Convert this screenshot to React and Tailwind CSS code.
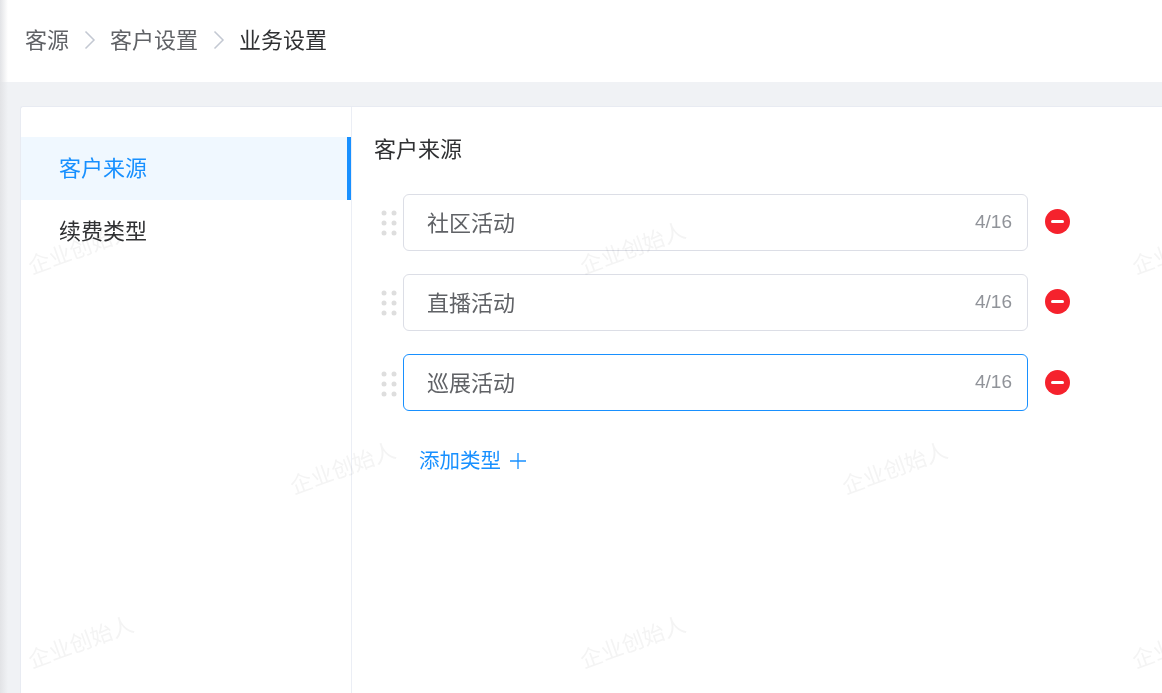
const rows = [
  { id: 1, name: '社区活动' },
  { id: 2, name: '直播活动' },
  { id: 3, name: '巡展活动', focused: true },
];

const marks = [
  'left-[26px] top-[236px]',
  'left-[578px] top-[236px]',
  'left-[1130px] top-[236px]',
  'left-[288px] top-[456px]',
  'left-[840px] top-[456px]',
  'left-[26px] top-[630px]',
  'left-[578px] top-[630px]',
  'left-[1130px] top-[630px]',
];

const Chevron = () => (
  <svg width="12" height="20" viewBox="0 0 12 20" fill="none" stroke="#c3c8d2" strokeWidth="1.5" className="ml-[15px] mr-[14px]">
    <path d="M1.5 1.5 10 10l-8.500 8.500" />
  </svg>
);

const Grip = ({ focused }) => (
  <svg
    width="16"
    height="26"
    viewBox="0 0 16 26"
    fill="#dedede"
    className={`mr-[6px] shrink-0 ${focused ? 'mt-[2px]' : ''}`}
  >
    <circle cx="3" cy="3" r="2.500" />
    <circle cx="13" cy="3" r="2.500" />
    <circle cx="3" cy="13" r="2.500" />
    <circle cx="13" cy="13" r="2.500" />
    <circle cx="3" cy="23" r="2.500" />
    <circle cx="13" cy="23" r="2.500" />
  </svg>
);

const Row = ({ name, focused }) => (
  <div className="flex items-center">
    <Grip focused={focused} />
    <div
      className={`flex h-[57px] w-[625px] items-center justify-between rounded-[6px] border pl-[23px] pr-[15px] ${
        focused ? 'border-[#1890ff]' : 'border-[#dcdee6]'
      }`}
    >
      <span className="pt-[2px] text-[22px] text-[#606266]">{name}</span>
      <span className="text-[19px] text-[#909399]">4/16</span>
    </div>
    <button
      className={`ml-[17px] flex h-[25px] w-[25px] items-center justify-center rounded-full bg-[#f5222d] ${
        focused ? '' : 'mb-[2px]'
      }`}
    >
      <span className="h-[3px] w-[13px] rounded-full bg-white" />
    </button>
  </div>
);

export default function App() {
  return (
    <div className="relative h-[693px] w-[1162px] overflow-hidden bg-[#f0f2f5] font-['Liberation_Sans','Noto_Sans_CJK_SC',sans-serif]">
      {/* Header */}
      <div className="flex h-[82px] items-center bg-white pb-[2px] pl-[25px] text-[22px] text-[#606266]">
        <span>客源</span>
        <Chevron />
        <span>客户设置</span>
        <Chevron />
        <span className="text-[#303133]">业务设置</span>
      </div>

      <div className="pl-[20px] pt-[24px]">
        <div className="flex h-[587px] rounded-tl-[3px] border-l border-t border-[#e8ebf2] bg-white pt-[30px]">
          {/* Side menu */}
          <div className="-mt-[30px] w-[331px] shrink-0 border-r border-[#ebeef5] pt-[30px]">
            <div className="flex h-[63px] items-center border-r-4 border-[#1890ff] bg-[#f0f8ff] pl-[38px] text-[22px] text-[#1890ff]">
              客户来源
            </div>
            <div className="flex h-[63px] items-center pl-[38px] text-[22px] text-[#303133]">续费类型</div>
          </div>

          {/* Source list */}
          <div className="pl-[22px]">
            <h2 className="text-[22px] font-normal leading-[26px] text-[#303133]">客户来源</h2>
            <div className="mt-[31px] flex flex-col gap-[23px] pl-[7px]">
              {rows.map((row) => (
                <Row key={row.id} name={row.name} focused={row.focused} />
              ))}
            </div>
            <button className="ml-[45px] mt-[36px] flex items-center text-[20.5px] leading-[28px] text-[#1890ff]">
              添加类型
              <svg width="16" height="16" viewBox="0 0 16 16" stroke="currentColor" strokeWidth="1.3" className="ml-[9px]">
                <path d="M0 8h16M8 0v16" />
              </svg>
            </button>
          </div>
        </div>
      </div>

      {/* Watermarks */}
      {marks.map((pos) => (
        <span
          key={pos}
          className={`pointer-events-none absolute whitespace-nowrap text-[22px] leading-[26px] text-[#f4f4f4] mix-blend-multiply -rotate-[20deg] ${pos}`}
        >
          企业创始人
        </span>
      ))}

      {/* Left edge shadow */}
      <div className="pointer-events-none absolute inset-y-0 left-0 w-[8px] bg-gradient-to-r from-[#e2e3e6] to-transparent" />
    </div>
  );
}
